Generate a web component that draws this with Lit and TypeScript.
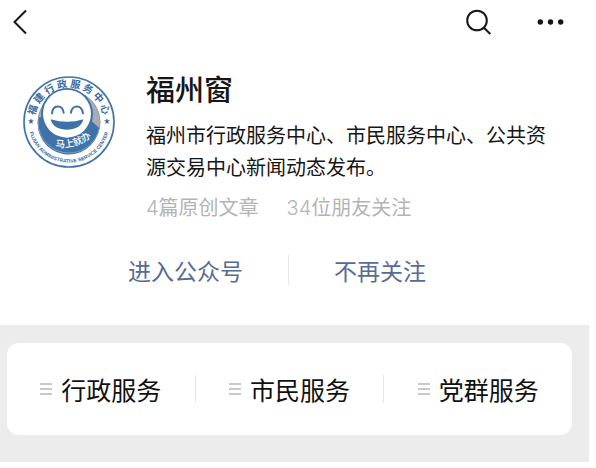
import { LitElement, html, css, svg } from "lit";
import { customElement, property } from "lit/decorators.js";

const STAR = "M0-9 L2.4-3 9-3 3.6 1.2 5.6 8 0 4 -5.6 8 -3.6 1.2 -9-3 -2.4-3Z";

@customElement("account-seal")
class AccountSeal extends LitElement {
  static styles = css`
    :host { display: block; }
    svg { display: block; width: 100%; }
    text { font-family: "Noto Sans CJK SC", sans-serif; font-weight: 700; }
    .ring-cn { font-size: 30px; fill: #3a6c9f; }
    .ring-en { font-family: "Liberation Sans", sans-serif; font-size: 15px; fill: #3a6c9f; }
    .motto { font-size: 29px; font-weight: 500; fill: #fff; }
  `;
  render() {
    return html`
      <svg viewBox="0 0 276 276" role="img" aria-label="福建行政服务中心">
        <defs>
          <path id="top" d="M34 138 A104 104 0 0 1 242 138 L242 150" />
          <path id="bottom" d="M16 138 A122 122 0 0 0 260 138" />
          <path id="motto" d="M97 213 Q166 224 224 166" />
        </defs>
        <circle cx="138" cy="138" r="135" fill="#fff" stroke="#4474a3" stroke-width="5" />
        <circle cx="138" cy="138" r="93" fill="#a9adb3" />
        <path d="M46 124 A93 93 0 1 0 229 157 L190 120Z" fill="#3f72a8" />
        <circle cx="138" cy="138" r="93" fill="none" stroke="#7f9dbb" stroke-width="3" />
        <circle cx="132" cy="114" r="78" fill="#3f72a8" />
        <circle cx="132" cy="113" r="72" fill="#fff" />
        <g fill="none" stroke="#3f72a8" stroke-width="6" stroke-linecap="round">
          <path d="M87 112 C89 86 118 84 122 110" />
          <path d="M144 110 C147 86 176 84 180 112" />
        </g>
        <path d="M83 130 Q132 145 181 130 C174 172 90 172 83 130Z" fill="#3f72a8" />
        <text class="motto"><textPath href="#motto">马上就办</textPath></text>
        <text class="ring-cn" text-anchor="middle">
          <textPath href="#top" startOffset="48%">${"福建行政服务中心".split("").join(" ")}</textPath>
        </text>
        <text class="ring-en" text-anchor="middle">
          <textPath href="#bottom" startOffset="50%">FUJIAN ADMINISTRATIVE SERVICE CENTER</textPath>
        </text>
        ${[24, 252].map(
          (x) => svg`<path d=${STAR} transform="translate(${x} 136)" fill="#3a6c9f" />`
        )}
      </svg>
    `;
  }
}

@customElement("menu-entry")
class MenuEntry extends LitElement {
  @property() label = "";
  static styles = css`
    :host { display: block; }
    button {
      display: flex; align-items: center; justify-content: center; gap: 9px;
      width: 100%; height: 92px; padding: 0; border: 0; background: none;
      font: 400 25px/36px "Noto Sans CJK SC", sans-serif; color: #111;
      white-space: nowrap; cursor: pointer;
    }
    svg { width: 12px; height: 12px; flex: none; }
  `;
  render() {
    return html`
      <button type="button">
        <svg viewBox="0 0 12 12" aria-hidden="true">
          <path d="M0 1H12M0 6H12M0 11H12" stroke="#b8b8b8" stroke-width="1.6" />
        </svg>
        <span>${this.label}</span>
      </button>
    `;
  }
}

@customElement("app-root")
class AppRoot extends LitElement {
  static styles = css`
    :host {
      display: block; padding: 0 7px 6px 0; background: #fff; color: #161616;
      font-family: "Noto Sans CJK SC", sans-serif;
    }
    .bar { display: flex; align-items: center; height: 44px; padding: 0 24px 0 10px; }
    .bar button { display: block; padding: 0; border: 0; background: none; cursor: pointer; }
    .bar svg { display: block; }
    .back { margin-right: auto; }
    .search { margin-right: 46px; }
    .profile { display: flex; align-items: flex-start; gap: 31px; padding: 24px 30px 0 23px; }
    account-seal { width: 92px; flex: none; margin-top: 8px; }
    .info { flex: 1; min-width: 0; }
    h1 { margin: 0; font-size: 29px; line-height: 40px; font-weight: 500; }
    .about { margin: 11px 0 9px; font-size: 20px; line-height: 32px; }
    .stats {
      display: flex; gap: 28px; color: #b4b4b4;
      font: 400 20px/32px Inter, "Noto Sans CJK SC", sans-serif;
    }
    .count { font-weight: 300; }
    .actions { display: flex; align-items: center; gap: 45px; padding: 30px 0 39px 128px; }
    .actions a { font-size: 23px; line-height: 32px; color: #576b95; text-decoration: none; }
    .rule { width: 1px; height: 30px; background: #e8e8e8; }
    .menu { padding: 18px 17px 27px 7px; background: #ececec; }
    .card { display: flex; align-items: center; border-radius: 12px; background: #fff; }
    .card menu-entry { flex: 1; }
    .card .rule { height: 28px; }
  `;
  render() {
    return html`
      <header class="bar">
        <button class="back" type="button" aria-label="返回">
          <svg width="20" height="28" viewBox="0 0 20 28">
            <path d="M16 2.5L4.5 14L16 25.5" fill="none" stroke="#161616" stroke-width="2" />
          </svg>
        </button>
        <button class="search" type="button" aria-label="搜索">
          <svg width="28" height="28" viewBox="0 0 28 28">
            <g fill="none" stroke="#161616" stroke-width="2">
              <circle cx="14" cy="12.5" r="9.8" />
              <path d="M20.7 19.5L27.3 26" />
            </g>
          </svg>
        </button>
        <button type="button" aria-label="更多">
          <svg width="28" height="28" viewBox="0 0 28 28" fill="#161616">
            <circle cx="3.3" cy="14" r="2.7" />
            <circle cx="13.5" cy="14" r="2.7" />
            <circle cx="23.7" cy="14" r="2.7" />
          </svg>
        </button>
      </header>
      <section class="profile">
        <account-seal></account-seal>
        <div class="info">
          <h1>福州窗</h1>
          <p class="about">福州市行政服务中心、市民服务中心、公共资源交易中心新闻动态发布。</p>
          <div class="stats">
            <span><span class="count">4</span>篇原创文章</span>
            <span><span class="count">34</span>位朋友关注</span>
          </div>
        </div>
      </section>
      <nav class="actions">
        <a href="#account">进入公众号</a>
        <span class="rule"></span>
        <a href="#unfollow">不再关注</a>
      </nav>
      <section class="menu">
        <div class="card">
          <menu-entry label="行政服务"></menu-entry>
          <span class="rule"></span>
          <menu-entry label="市民服务"></menu-entry>
          <span class="rule"></span>
          <menu-entry label="党群服务"></menu-entry>
        </div>
      </section>
    `;
  }
}
